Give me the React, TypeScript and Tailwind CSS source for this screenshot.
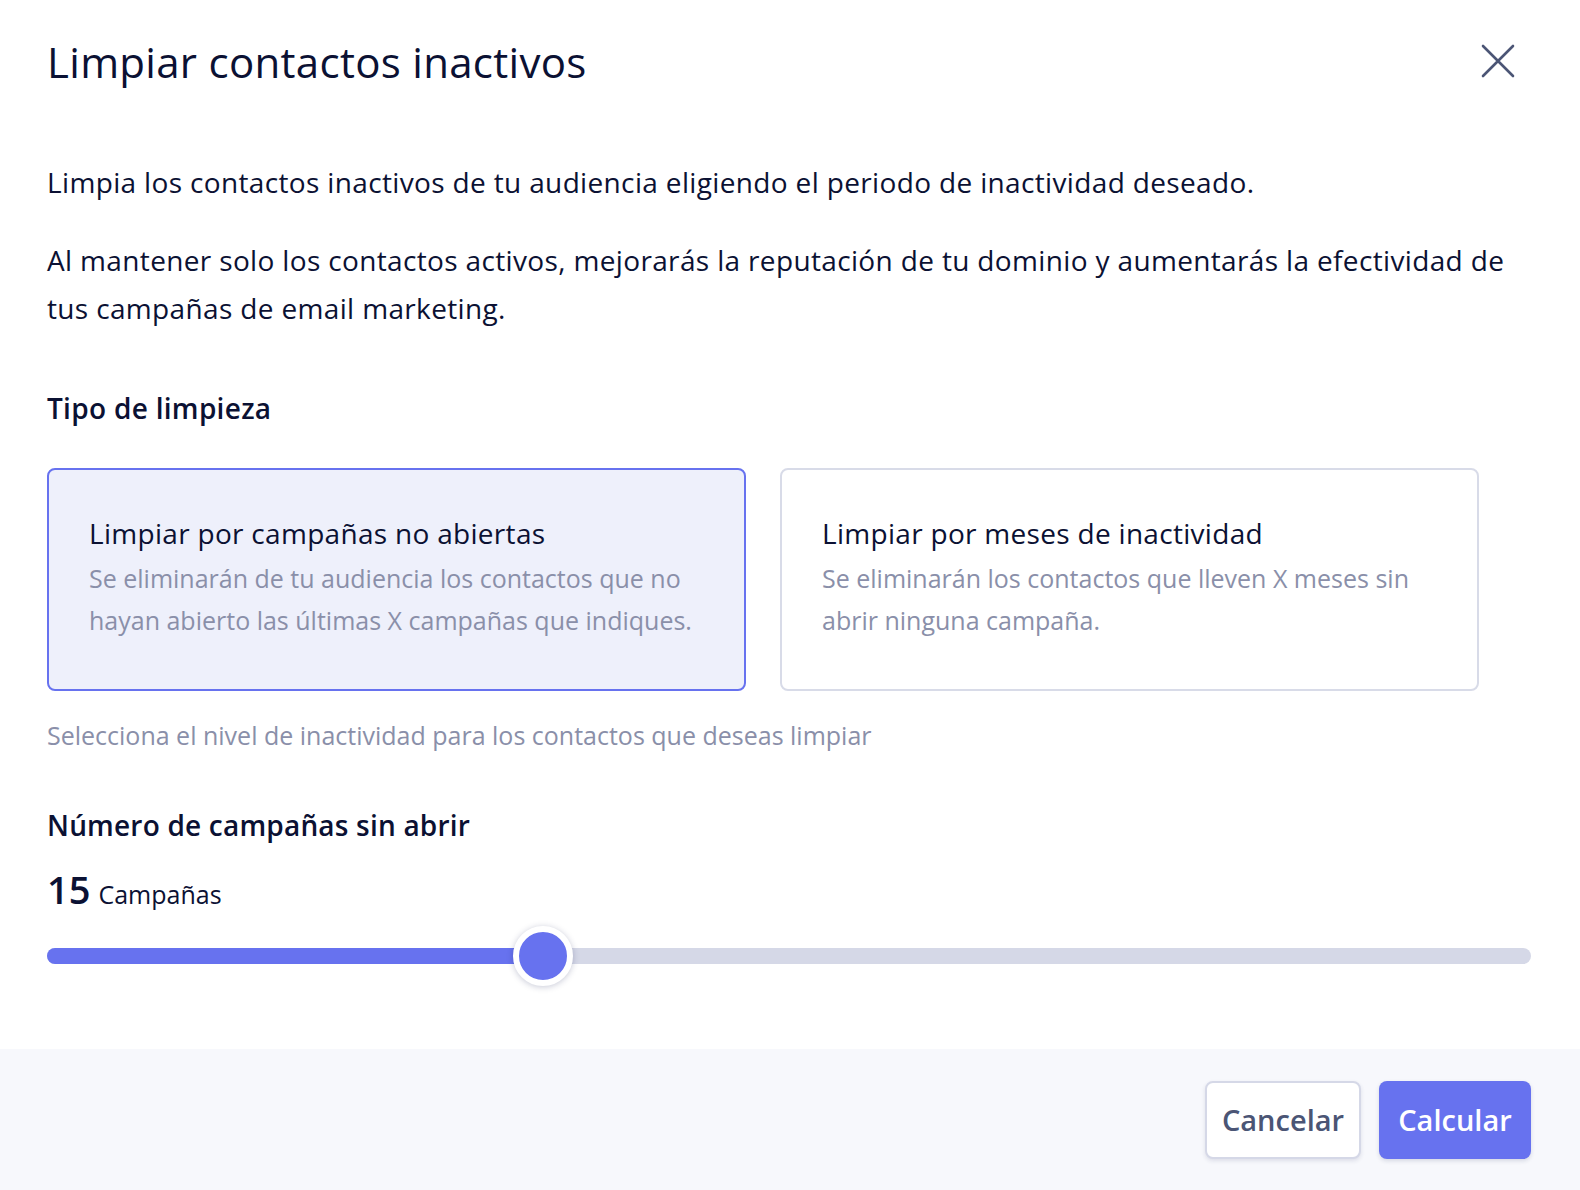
import React, { useState } from "react";

const cards = [
  {
    title: "Limpiar por campañas no abiertas",
    desc: "Se eliminarán de tu audiencia los contactos que no hayan abierto las últimas X campañas que indiques.",
  },
  {
    title: "Limpiar por meses de inactividad",
    desc: "Se eliminarán los contactos que lleven X meses sin abrir ninguna campaña.",
  },
];

export default function App() {
  const [selected, setSelected] = useState(0);
  const value = 15;
  const pct = 33.4;

  return (
    <div className="w-[1580px] h-[1190px] bg-white flex flex-col text-[#0b1133] font-['Open_Sans','Liberation_Sans',sans-serif]">
      <div className="flex-1 px-[47px] pt-[36px]">
        <div className="flex items-start justify-between">
          <h1 className="text-[42px] leading-[52px] tracking-[0.3px]">Limpiar contactos inactivos</h1>
          <button className="mr-[18px] mt-[8px] text-[#4b5575]">
            <svg width="34" height="34" viewBox="0 0 34 34" fill="none">
              <path d="M2 2 L32 32 M32 2 L2 32" stroke="currentColor" strokeWidth="2.6" strokeLinecap="round" />
            </svg>
          </button>
        </div>

        <p className="mt-[70px] text-[28px] leading-[48px] tracking-[0.35px]">
          Limpia los contactos inactivos de tu audiencia eligiendo el periodo de inactividad deseado.
        </p>
        <p className="mt-[30px] text-[28px] leading-[48px] tracking-[0.35px]">
          Al mantener solo los contactos activos, mejorarás la reputación de tu dominio y aumentarás la efectividad de tus campañas de email marketing.
        </p>

        <h2 className="mt-[56px] text-[28px] leading-[40px] font-semibold tracking-[0.3px]">Tipo de limpieza</h2>

        <div className="mt-[40px] flex gap-[34px]">
          {cards.map((c, i) => (
            <div
              key={i}
              onClick={() => setSelected(i)}
              className={`w-[699px] h-[223px] cursor-pointer rounded-[8px] border-2 px-[40px] pt-[43px] ${
                selected === i ? "bg-[#eef0fb] border-[#6772ef]" : "bg-white border-[#d8dbe8]"
              }`}
            >
              <div className="text-[28px] leading-[40px] tracking-[0.3px]">{c.title}</div>
              <div className="mt-[4px] text-[25px] leading-[42px] text-[#8a8fa9]">{c.desc}</div>
            </div>
          ))}
        </div>

        <p className="mt-[26px] text-[25px] leading-[36px] text-[#8a8fa9]">
          Selecciona el nivel de inactividad para los contactos que deseas limpiar
        </p>

        <h2 className="mt-[52px] text-[28px] leading-[40px] font-semibold tracking-[0.2px]">Número de campañas sin abrir</h2>

        <div className="mt-[22px] flex items-baseline gap-[8px]">
          <span className="text-[38px] leading-[44px] font-semibold">{value}</span>
          <span className="text-[25px] leading-[36px]">Campañas</span>
        </div>

        <div className="mt-[36px] relative h-[16px] w-[1484px] rounded-full bg-[#d5d8e7]">
          <div className="h-full rounded-full bg-[#6772ef]" style={{ width: `${pct}%` }} />
          <div
            className="absolute top-1/2 w-[60px] h-[60px] -translate-x-1/2 -translate-y-1/2 rounded-full bg-[#6772ef] border-[6px] border-white shadow-[0_1px_6px_rgba(30,40,90,0.25)]"
            style={{ left: `${pct}%` }}
          />
        </div>
      </div>

      <div className="h-[141px] bg-[#f7f8fc] flex items-start justify-end gap-[18px] pt-[32px] pr-[49px]">
        <button className="h-[78px] w-[156px] rounded-[8px] bg-white border-2 border-[#d5d8e7] shadow-[0_2px_4px_rgba(30,40,90,0.12)] text-[29px] font-semibold text-[#4b5575]">
          Cancelar
        </button>
        <button className="h-[78px] w-[152px] rounded-[8px] bg-[#6772ef] shadow-[0_2px_4px_rgba(30,40,90,0.15)] text-[29px] font-semibold text-white">
          Calcular
        </button>
      </div>
    </div>
  );
}
